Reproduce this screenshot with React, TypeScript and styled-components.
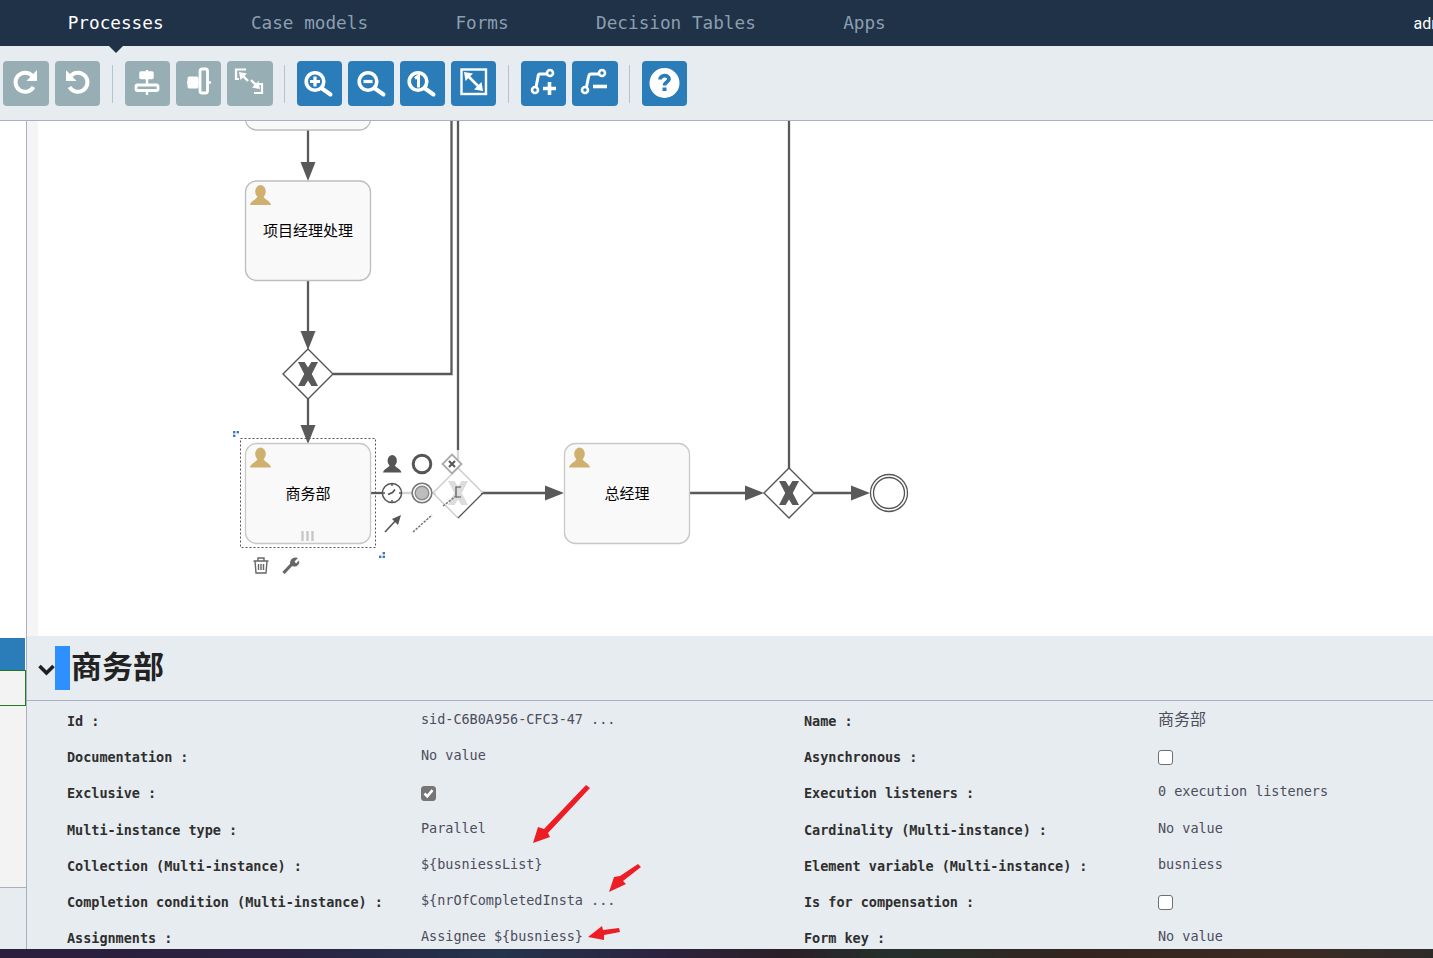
import React from "react";
import styled, { createGlobalStyle } from "styled-components";

const GlobalStyle = createGlobalStyle`
  html, body {
    margin: 0;
    padding: 0;
    background: #fff;
    overflow: hidden;
  }
`;

const MONO = `"DejaVu Sans Mono", "Noto Sans CJK SC", monospace`;
const CJK = `"Noto Sans CJK SC", "Noto Sans", sans-serif`;

const Page = styled.div`
  position: relative;
  width: 1433px;
  height: 958px;
  display: flex;
  flex-direction: column;
  overflow: hidden;
`;

const NavBar = styled.nav`
  height: 46px;
  flex-shrink: 0;
  display: flex;
  align-items: center;
  padding-left: 24px;
  background: #1f3247;
  overflow: hidden;
`;

const Tab = styled.a<{ $active?: boolean }>`
  padding: 0 43.7px;
  font: 400 17.7px ${MONO};
  line-height: 45px;
  color: ${(p) => (p.$active ? "#ffffff" : "#8c9fb0")};
  white-space: nowrap;
`;

const UserName = styled.span`
  margin-left: 484px;
  flex-shrink: 0;
  font: 400 16px "Roboto", "Liberation Sans", sans-serif;
  color: #fff;
`;

const TabCaret = styled.div`
  position: absolute;
  left: 109px;
  top: 46px;
  width: 0;
  height: 0;
  border-left: 7.5px solid transparent;
  border-right: 7.5px solid transparent;
  border-top: 7px solid #1f3247;
`;

const Toolbar = styled.div`
  box-sizing: border-box;
  height: 75px;
  flex-shrink: 0;
  display: flex;
  align-items: center;
  gap: 6px;
  padding: 1px 0 0 3.4px;
  background: #e7ecf0;
  border-bottom: 1px solid #a8b1bf;
`;

const ToolButton = styled.button<{ $muted?: boolean }>`
  width: 45.33px;
  height: 45px;
  padding: 0;
  border: 0;
  border-radius: 4px;
  background: ${(p) => (p.$muted ? "#97aeb5" : "#2a7db8")};
  flex-shrink: 0;
  & svg {
    display: block;
    width: 45px;
    height: 45px;
    fill: none;
    stroke: #fff;
    stroke-width: 2.6;
  }
`;

const ToolDivider = styled.span`
  width: 1px;
  height: 38px;
  margin: 0 6px 0 5.5px;
  background: #b9c2cc;
  flex-shrink: 0;
`;

const Main = styled.div`
  flex: 1;
  min-height: 0;
  display: flex;
`;

const Sidebar = styled.aside`
  width: 26px;
  flex-shrink: 0;
  display: flex;
  flex-direction: column;
  border-right: 1px solid #a8b1bf;
  background: #fff;
`;

const SideSpacer = styled.div`
  height: 517px;
`;

const SideActive = styled.div`
  height: 32px;
  width: 25px;
  background: #2a7db8;
`;

const SideSelected = styled.div`
  height: 34px;
  border: 1px solid #1f7a1f;
  border-left: 0;
  background: #f3f3f3;
`;

const SideList = styled.div`
  height: 181px;
  background: #f3f3f3;
  border-bottom: 1px solid #a8b1bf;
`;

const SideFoot = styled.div`
  flex: 1;
  background: #e7ecf0;
`;

const Content = styled.div`
  flex: 1;
  min-width: 0;
  display: flex;
  flex-direction: column;
`;

const Canvas = styled.div`
  height: 515px;
  flex-shrink: 0;
  display: flex;
  background: #fff;
`;

const CanvasGutter = styled.div`
  width: 11px;
  background: #f5f5f5;
`;

const Diagram = styled.svg`
  display: block;
  width: 1395px;
  height: 515px;
  flex-shrink: 0;
`;

const TaskLabel = styled.text`
  font: 400 15px ${CJK};
  fill: #000;
  text-anchor: middle;
`;

const Panel = styled.section`
  flex: 1;
  min-height: 0;
  background: #e7ecf0;
  overflow: hidden;
`;

const PanelHeader = styled.header`
  height: 64px;
  display: flex;
  align-items: center;
  padding-left: 11px;
  border-bottom: 1px solid #a8b1bf;
`;

const Chevron = styled.svg`
  width: 17px;
  height: 12px;
  margin-top: 4px;
  fill: none;
  stroke: #1f1f1f;
  stroke-width: 3.6;
`;

const TitleSelection = styled.span`
  width: 15px;
  height: 44px;
  background: #2e8fff;
`;

const Title = styled.h1`
  margin: 0 0 6px 1px;
  font: 700 31px ${CJK};
  line-height: 44px;
  color: #222;
`;

const PropGrid = styled.div`
  display: grid;
  grid-template-columns: 354px 383px 354px 1fr;
  grid-auto-rows: 36.2px;
  align-items: center;
  padding: 2px 0 0 40px;
`;

const PropLabel = styled.div`
  font: 700 13.5px ${MONO};
  color: #2f2f2f;
  white-space: pre;
  letter-spacing: -0.03px;
`;

const PropValue = styled.div<{ $cjk?: boolean }>`
  margin-bottom: ${(p) => (p.$cjk ? "6px" : "4px")};
  font: 400 ${(p) => (p.$cjk ? "16px" : "13.5px")} ${MONO};
  color: #4d4d5c;
  white-space: pre;
  letter-spacing: -0.03px;
`;

const CheckBox = styled.span<{ $checked?: boolean }>`
  box-sizing: border-box;
  display: flex;
  align-items: center;
  justify-content: center;
  width: 15px;
  height: 15px;
  border-radius: 3px;
  border: 1px solid ${(p) => (p.$checked ? "#767676" : "#6f6f6f")};
  background: ${(p) => (p.$checked ? "#767676" : "#fff")};
  & svg {
    width: 11px;
    height: 11px;
    fill: none;
    stroke: #fff;
    stroke-width: 2.6;
  }
`;

const DesktopStrip = styled.div`
  height: 9px;
  flex-shrink: 0;
  background: linear-gradient(
    90deg,
    #2a1f3d 0%,
    #2a2240 20%,
    #24344a 35%,
    #2c2440 45%,
    #2a1f25 55%,
    #24302c 62%,
    #33241f 75%,
    #3a2a22 90%,
    #2d2b2a 100%
  );
`;

const Annotations = styled.svg`
  position: absolute;
  left: 0;
  top: 0;
  width: 1433px;
  height: 958px;
  fill: #ee1c25;
  pointer-events: none;
`;

const LINE = "#595959";

const UserIcon = ({ x, y, fill, scale = 1 }: { x: number; y: number; fill: string; scale?: number }) => (
  <g transform={`translate(${x} ${y}) scale(${scale})`} fill={fill}>
    <ellipse cx="10.5" cy="6.5" rx="5.3" ry="6.5" />
    <path d="M0 20 C1 15.5 6 15 8 11 L13 11 C15 15 20 15.5 21 20 Z" />
  </g>
);

const Task = ({ x, y, h = 100, label, stroke = "#bdbdbd" }: { x: number; y: number; h?: number; label?: string; stroke?: string }) => (
  <g>
    <rect x={x + 0.5} y={y + 0.5} width="125" height={h} rx="11" fill="#f9f9f9" stroke={stroke} strokeWidth="1.3" />
    <UserIcon x={x + 5} y={y + 4.5} fill="#cfb06f" />
    {label && <TaskLabel x={x + 63} y={y + 55.5}>{label}</TaskLabel>}
  </g>
);

const xMark = (cx: number, cy: number) =>
  [
    [-10, -12], [-3.4, -12], [0, -6.5], [3.4, -12], [10, -12], [3.8, 0],
    [10, 12], [3.4, 12], [0, 6.5], [-3.4, 12], [-10, 12], [-3.8, 0],
  ]
    .map(([dx, dy]) => `${cx + dx},${cy + dy}`)
    .join(" ");

const Gateway = ({ cx, cy }: { cx: number; cy: number }) => (
  <g>
    <polygon points={`${cx},${cy - 25} ${cx + 25},${cy} ${cx},${cy + 25} ${cx - 25},${cy}`} fill="#fff" stroke="#555" strokeWidth="1.4" />
    <polygon points={xMark(cx, cy)} fill="#595959" />
  </g>
);

const HeadDown = ({ x, y }: { x: number; y: number }) => (
  <polygon points={`${x - 7.5},${y - 19} ${x + 7.5},${y - 19} ${x},${y}`} fill={LINE} />
);

const HeadRight = ({ x, y }: { x: number; y: number }) => (
  <polygon points={`${x - 19},${y - 7.5} ${x - 19},${y + 7.5} ${x},${y}`} fill={LINE} />
);

const Handle = ({ squares }: { squares: [number, number][] }) => (
  <g fill="#3d78c0">
    {squares.map(([x, y]) => (
      <rect key={`${x}-${y}`} x={x} y={y} width="2.4" height="2.4" />
    ))}
  </g>
);

const ProcessDiagram = () => (
  <Diagram viewBox="38 121 1395 515">
    <g fill="none" stroke={LINE} strokeWidth="2.3">
      <path d="M308 130 V165" />
      <path d="M308 280 V335" />
      <path d="M308 399 V426" />
      <path d="M333 374 H451.5 V121" />
      <path d="M458 121 V450" />
      <path d="M789 121 V470" />
      <path d="M481 493 H548" />
      <path d="M689 493 H748" />
      <path d="M814 493 H854" />
      <path d="M370 493 H384" />
    </g>
    <path d="M458 450 V472" stroke="#d5d5d5" strokeWidth="2.3" />
    <path d="M398 493 H436" stroke="#d5d5d5" strokeWidth="2.3" />

    <rect x="245.5" y="60" width="125" height="70" rx="11" fill="#f9f9f9" stroke="#bdbdbd" strokeWidth="1.3" />
    <HeadDown x={308} y={181} />
    <Task x={245} y={180.5} h={99.5} label="项目经理处理" />
    <HeadDown x={308} y={350} />
    <Gateway cx={308} cy={374} />
    <HeadDown x={308} y={444} />

    <Task x={245} y={443} h={100} label="商务部" stroke="#c8c8c8" />
    <path d="M302.5 531 V541 M307.5 531 V541 M312.5 531 V541" stroke="#c8c8c8" strokeWidth="2.4" fill="none" />
    <rect x="240.5" y="438.5" width="135" height="109" fill="none" stroke="#555" strokeWidth="1" strokeDasharray="2 2" />
    <Handle squares={[[233, 431], [236.6, 431], [233, 434.6]]} />
    <Handle squares={[[382.6, 552], [379, 555.6], [382.6, 555.6]]} />

    {/* morph / shape popup beside the selected task */}
    <UserIcon x={383} y={455} fill="#555" scale={0.88} />
    <circle cx="422" cy="464" r="8.8" fill="#fff" stroke="#555" strokeWidth="3" />
    <circle cx="392" cy="493" r="9.6" fill="#fff" stroke="#555" strokeWidth="1.5" />
    <path d="M392 483.5 V486 M392 500 V502.5 M382.5 493 H385 M399 493 H401.5" stroke="#555" strokeWidth="1.5" fill="none" />
    <path d="M388 494.5 L392.5 492.5 L395 489.5" stroke="#555" strokeWidth="1.8" fill="none" />
    <circle cx="422" cy="493" r="9.8" fill="#fff" stroke="#777" strokeWidth="1.6" />
    <circle cx="422" cy="493" r="6.8" fill="#bdbdbd" stroke="#8a8a8a" strokeWidth="1.4" />
    <path d="M385 532 L398 518" stroke="#555" strokeWidth="1.6" />
    <polygon points="401,515 398,525 392,519" fill="#555" />
    <path d="M413 532 L432 515" stroke="#777" strokeWidth="1.5" strokeDasharray="2.4 1.2" />

    <polyline points="433,493 458,468 483,493" fill="#fff" stroke="#c9c9c9" strokeWidth="1.3" />
    <polyline points="433,493 458,518" fill="none" stroke="#c9c9c9" strokeWidth="1.3" />
    <polyline points="483,493 458,518" fill="none" stroke="#555" strokeWidth="1.3" />
    <polygon points={xMark(458, 493)} fill="#dcdcdc" />
    <path d="M461 487 H456 V497 H461" stroke="#555" strokeWidth="1.2" fill="none" />
    <path d="M443 506 L456 496" stroke="#777" strokeWidth="1.5" strokeDasharray="2.4 1.2" />
    <polygon points="452,454.5 461.5,464 452,473.5 442.5,464" fill="#fff" stroke="#aaa" strokeWidth="1.8" />
    <path d="M449 461 L455 467 M455 461 L449 467" stroke="#555" strokeWidth="2" />

    {/* context tools under the task */}
    <g fill="none" stroke="#666" strokeWidth="1.4">
      <path d="M253.5 561 H268.5 M258 561 V558 H264 V561" />
      <path d="M255 561 L256 573 H266 L267 561" />
      <path d="M258.5 564 V570 M261 564 V570 M263.5 564 V570" />
    </g>
    <path d="M283.5 573 L292 564" stroke="#666" strokeWidth="3.2" fill="none" />
    <path d="M291 565.5 C288 560 294 556 298 558 L294.5 561.5 L296 563.5 L299 560.5 C300.5 565 295 568.5 291 565.5 Z" fill="#666" />

    <HeadRight x={564} y={493} />
    <Task x={564} y={443} h={100} label="总经理" stroke="#c8c8c8" />
    <HeadRight x={764} y={493} />
    <Gateway cx={789} cy={493} />
    <HeadRight x={870} y={493} />
    <circle cx="889" cy="493" r="18.5" fill="#fff" stroke="#555" strokeWidth="1.3" />
    <circle cx="889" cy="493" r="15.5" fill="#fff" stroke="#555" strokeWidth="1.3" />
  </Diagram>
);

const Glyph = ({ children }: { children: React.ReactNode }) => (
  <svg viewBox="0 0 45 45">{children}</svg>
);

const RedoIcon = () => (
  <Glyph>
    <path d="M29 14.5 A9.6 9.6 0 1 0 30.5 26" strokeWidth="4" />
    <polygon points="34,9 34,20 23.5,20" fill="#fff" stroke="none" />
  </Glyph>
);

const UndoIcon = () => (
  <Glyph>
    <path d="M16 14.5 A9.6 9.6 0 1 1 14.5 26" strokeWidth="4" />
    <polygon points="11,9 11,20 21.5,20" fill="#fff" stroke="none" />
  </Glyph>
);

const AlignVerticalIcon = () => (
  <Glyph>
    <path d="M22 9 V34" strokeWidth="2.4" />
    <rect x="15" y="11" width="13" height="6.5" fill="#fff" stroke="#fff" strokeWidth="1.5" rx="1" />
    <rect x="11" y="24" width="22" height="5.5" fill="#97aeb5" rx="1.5" strokeWidth="2.8" />
  </Glyph>
);

const AlignHorizontalIcon = () => (
  <Glyph>
    <path d="M11 21.5 H35" strokeWidth="2.4" />
    <rect x="12" y="16" width="10" height="11" fill="#fff" stroke="#fff" strokeWidth="1" rx="1" />
    <rect x="24" y="8" width="7.5" height="24" fill="#97aeb5" rx="2" strokeWidth="2.8" />
  </Glyph>
);

const SameSizeIcon = () => (
  <Glyph>
    <path d="M19 8.5 H9 V18 H12" strokeWidth="2.2" />
    <path d="M14 13 L21 20" strokeWidth="2.4" />
    <polygon points="12,11 20,12.5 13.5,19" fill="#fff" stroke="none" />
    <path d="M27 32 H35 V23 H32" strokeWidth="2.2" />
    <path d="M24 19 L30.5 25.5" strokeWidth="2.4" />
    <polygon points="33,28 25,26.5 31.5,20" fill="#fff" stroke="none" />
  </Glyph>
);

const Lens = ({ cx }: { cx: number }) => (
  <>
    <circle cx={cx} cy="20.5" r="8.8" strokeWidth="3.6" />
    <path d={`M${cx + 7} 27.5 L${cx + 15.5} 33.5`} strokeWidth="4" strokeLinecap="round" />
  </>
);

const ZoomInIcon = () => (
  <Glyph>
    <Lens cx={18} />
    <path d="M13 20.5 H23 M18 15.5 V25.5" strokeWidth="3.2" />
  </Glyph>
);

const ZoomOutIcon = () => (
  <Glyph>
    <Lens cx={20} />
    <path d="M15.5 20.5 H24.5" strokeWidth="3.2" />
  </Glyph>
);

const ZoomActualIcon = () => (
  <Glyph>
    <Lens cx={18} />
    <path d="M15 17.5 L18.5 15 V26.5" strokeWidth="3" />
  </Glyph>
);

const ZoomFitIcon = () => (
  <Glyph>
    <rect x="10.5" y="8.5" width="24.5" height="24.5" strokeWidth="2.4" />
    <path d="M15 13 L30 28" strokeWidth="2.6" />
    <polygon points="13,11 22,12.5 14.5,20" fill="#fff" stroke="none" />
    <polygon points="32,30 23,28.5 30.5,21" fill="#fff" stroke="none" />
  </Glyph>
);

const FlowBase = ({ a, b, mid }: { a: [number, number]; b: [number, number]; mid: string }) => (
  <>
    <circle cx={a[0]} cy={a[1]} r="3" strokeWidth="2.6" />
    <circle cx={b[0]} cy={b[1]} r="3" strokeWidth="2.6" />
    <path d={mid} strokeWidth="3" />
  </>
);

const AddBendIcon = () => (
  <Glyph>
    <FlowBase a={[29, 12]} b={[14, 29]} mid="M26 13 H19 Q17 13 17 16 L15 26" />
    <path d="M22 27.5 H35 M28.5 21 V34" strokeWidth="3.6" />
  </Glyph>
);

const RemoveBendIcon = () => (
  <Glyph>
    <FlowBase a={[30, 12]} b={[13, 29]} mid="M27 13 H19 Q17 13 16.5 16 L14.5 26" />
    <path d="M21 25.5 H35" strokeWidth="3.6" />
  </Glyph>
);

const HelpIcon = () => (
  <Glyph>
    <circle cx="22.5" cy="22" r="15" fill="#fff" stroke="none" />
    <path d="M18 18.5 C18 13.5 27 13.5 27 18 C27 21 22.5 21 22.5 24.5" stroke="#2a7db8" strokeWidth="3.8" />
    <path d="M22.5 26.5 V30" stroke="#2a7db8" strokeWidth="4" />
  </Glyph>
);

const Check = () => (
  <svg viewBox="0 0 11 11">
    <path d="M1.5 5.5 L4.3 8.3 L9.5 2.2" />
  </svg>
);

const tabs = ["Processes", "Case models", "Forms", "Decision Tables", "Apps"];

const App: React.FC = () => (
  <Page>
    <GlobalStyle />
    <NavBar>
      {tabs.map((tab, index) => (
        <Tab key={tab} $active={index === 0}>
          {tab}
        </Tab>
      ))}
      <UserName>admin</UserName>
    </NavBar>
    <TabCaret />
    <Toolbar>
      <ToolButton $muted><RedoIcon /></ToolButton>
      <ToolButton $muted><UndoIcon /></ToolButton>
      <ToolDivider />
      <ToolButton $muted><AlignVerticalIcon /></ToolButton>
      <ToolButton $muted><AlignHorizontalIcon /></ToolButton>
      <ToolButton $muted><SameSizeIcon /></ToolButton>
      <ToolDivider />
      <ToolButton><ZoomInIcon /></ToolButton>
      <ToolButton><ZoomOutIcon /></ToolButton>
      <ToolButton><ZoomActualIcon /></ToolButton>
      <ToolButton><ZoomFitIcon /></ToolButton>
      <ToolDivider />
      <ToolButton><AddBendIcon /></ToolButton>
      <ToolButton><RemoveBendIcon /></ToolButton>
      <ToolDivider />
      <ToolButton><HelpIcon /></ToolButton>
    </Toolbar>
    <Main>
      <Sidebar>
        <SideSpacer />
        <SideActive />
        <SideSelected />
        <SideList />
        <SideFoot />
      </Sidebar>
      <Content>
        <Canvas>
          <CanvasGutter />
          <ProcessDiagram />
        </Canvas>
        <Panel>
          <PanelHeader>
            <Chevron viewBox="0 0 17 12">
              <path d="M1.5 2 L8.5 9 L15.5 2" />
            </Chevron>
            <TitleSelection />
            <Title>商务部</Title>
          </PanelHeader>
          <PropGrid>
            <PropLabel>Id :</PropLabel>
            <PropValue>sid-C6B0A956-CFC3-47 ...</PropValue>
            <PropLabel>Name :</PropLabel>
            <PropValue $cjk>商务部</PropValue>

            <PropLabel>Documentation :</PropLabel>
            <PropValue>No value</PropValue>
            <PropLabel>Asynchronous :</PropLabel>
            <CheckBox />

            <PropLabel>Exclusive :</PropLabel>
            <CheckBox $checked><Check /></CheckBox>
            <PropLabel>Execution listeners :</PropLabel>
            <PropValue>0 execution listeners</PropValue>

            <PropLabel>Multi-instance type :</PropLabel>
            <PropValue>Parallel</PropValue>
            <PropLabel>Cardinality (Multi-instance) :</PropLabel>
            <PropValue>No value</PropValue>

            <PropLabel>Collection (Multi-instance) :</PropLabel>
            <PropValue>{"${busniessList}"}</PropValue>
            <PropLabel>Element variable (Multi-instance) :</PropLabel>
            <PropValue>busniess</PropValue>

            <PropLabel>Completion condition (Multi-instance) :</PropLabel>
            <PropValue>{"${nrOfCompletedInsta ..."}</PropValue>
            <PropLabel>Is for compensation :</PropLabel>
            <CheckBox />

            <PropLabel>Assignments :</PropLabel>
            <PropValue>{"Assignee ${busniess}"}</PropValue>
            <PropLabel>Form key :</PropLabel>
            <PropValue>No value</PropValue>
          </PropGrid>
        </Panel>
      </Content>
    </Main>
    <DesktopStrip />
    {/* red arrows somebody drew on the screenshot */}
    <Annotations viewBox="0 0 1433 958">
      <polygon points="533,843 538,827 544,829 586,785 590,788 548,833 550,837" />
      <polygon points="609,892 614,877 620,876 638,864 641,867 623,881 626,884" />
      <polygon points="588,937 602,926 603,930 619,928 620,932 604,935 604,940" />
    </Annotations>
  </Page>
);

export default App;
